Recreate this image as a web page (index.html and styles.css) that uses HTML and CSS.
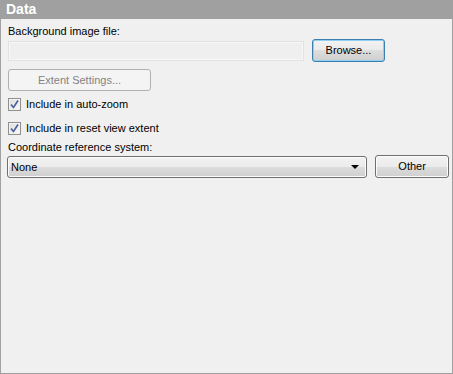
FILE: index.html
```html
<!DOCTYPE html>
<html lang="en">
<head>
    <meta charset="UTF-8">
    <title>Data</title>
    <link rel="stylesheet" href="styles.css">
</head>
<body>
<div class="panel">
    <div class="panel-header">Data</div>
    <div class="panel-body">
        <div class="label">Background image file:</div>
        <div class="file-row">
            <div class="text-input"></div>
            <div class="button focused">Browse...</div>
        </div>
        <div class="button disabled extent">Extent Settings...</div>
        <div class="check-row">
            <span class="checkbox">
                <svg width="9" height="9" viewBox="0 0 9 9"><path d="M1 4.5 L3.5 7.5 L8 0.5" fill="none" stroke="#4a5f97" stroke-width="1.6"/></svg>
            </span>
            <span>Include in auto-zoom</span>
        </div>
        <div class="check-row">
            <span class="checkbox">
                <svg width="9" height="9" viewBox="0 0 9 9"><path d="M1 4.5 L3.5 7.5 L8 0.5" fill="none" stroke="#4a5f97" stroke-width="1.6"/></svg>
            </span>
            <span>Include in reset view extent</span>
        </div>
        <div class="label crs-label">Coordinate reference system:</div>
        <div class="crs-row">
            <div class="select">
                <span>None</span>
                <span class="arrow"></span>
            </div>
            <div class="button other">Other</div>
        </div>
    </div>
</div>
</body>
</html>
```

FILE: styles.css
```css
body {
    margin: 0;
    padding: 0;
    font-family: "Liberation Sans", Arial, sans-serif;
    font-size: 11px;
    color: #000;
    background-color: #f0f0f0;
}

.panel {
    width: 453px;
    height: 374px;
    box-sizing: border-box;
    border: 1px solid #a0a0a0;
    border-top: none;
    background-color: #f0f0f0;
    display: flex;
    flex-direction: column;
}

.panel-header {
    height: 19px;
    margin: 0 -1px;
    background-color: #a0a0a0;
    color: white;
    font-weight: bold;
    font-size: 14px;
    line-height: 19px;
    padding-left: 6px;
}

.panel-body {
    padding: 6px 3px 0 7px;
    display: flex;
    flex-direction: column;
}

.label {
    line-height: 13px;
    height: 13px;
}

.file-row {
    display: flex;
    align-items: center;
    margin-top: 1px;
    height: 23px;
}

.text-input {
    width: 296px;
    height: 20px;
    box-sizing: border-box;
    border: 1px solid #e2e2e2;
    box-shadow: inset 0 0 0 1px #f7f7f7;
    background-color: #efefef;
    margin-right: 8px;
}

.button {
    box-sizing: border-box;
    height: 23px;
    border: 1px solid #707070;
    border-radius: 3px;
    background: linear-gradient(#f2f2f2, #ebebeb 50%, #dddddd 50%, #cfcfcf);
    box-shadow: inset 0 0 0 1px #fcfcfc;
    text-align: center;
    line-height: 21px;
}

.button.focused {
    width: 73px;
    border-color: #3c7fb1;
    box-shadow: inset 0 0 0 1px #8fd0f2;
}

.button.disabled {
    background: #f4f4f4;
    border-color: #adb2b5;
    box-shadow: none;
    color: #838383;
}

.extent {
    width: 143px;
    height: 22px;
    line-height: 20px;
    margin-top: 7px;
}

.check-row {
    display: flex;
    align-items: center;
    height: 13px;
    line-height: 13px;
    margin-top: 7px;
}

.check-row + .check-row {
    margin-top: 11px;
}

.checkbox {
    width: 13px;
    height: 13px;
    box-sizing: border-box;
    border: 1px solid #8e8f8f;
    background: linear-gradient(135deg, #dcdcdc, #fbfbfb);
    box-shadow: inset 0 0 0 1px #f4f4f4;
    display: flex;
    align-items: center;
    justify-content: center;
    margin-right: 5px;
}

.crs-label {
    margin-top: 6px;
}

.crs-row {
    display: flex;
    align-items: flex-start;
    margin-top: 1px;
    margin-left: -1px;
    height: 23px;
}

.select {
    width: 361px;
    height: 22px;
    box-sizing: border-box;
    border: 1px solid #707070;
    border-radius: 3px;
    background: linear-gradient(#f2f2f2, #ebebeb 50%, #dddddd 50%, #cfcfcf);
    box-shadow: inset 0 0 0 1px #fcfcfc;
    display: flex;
    align-items: center;
    justify-content: space-between;
    padding: 0 7px 0 3px;
    margin-top: 1px;
    margin-right: 8px;
}

.arrow {
    width: 0;
    height: 0;
    border-left: 4px solid transparent;
    border-right: 4px solid transparent;
    border-top: 4px solid #000;
}

.button.other {
    width: 74px;
}
```
